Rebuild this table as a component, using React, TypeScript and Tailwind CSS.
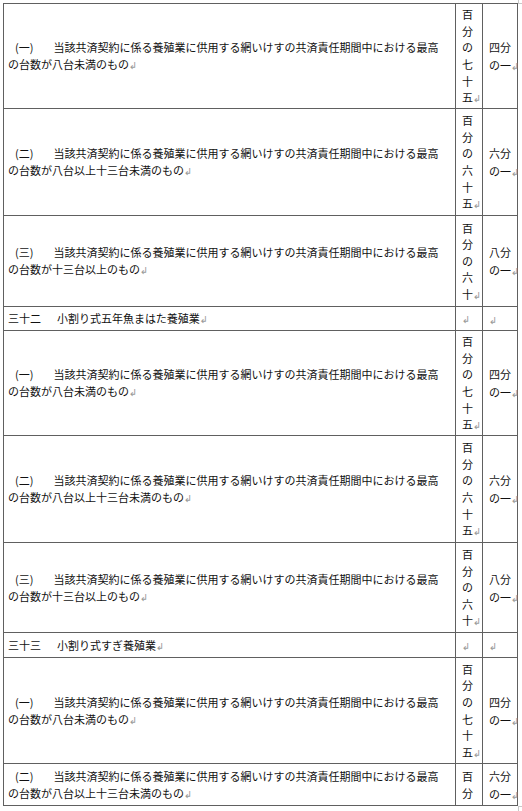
import React from "react";

const RM = () => (
  <span className="font-['DejaVu_Sans'] text-[10px] leading-none text-[#9a9a9a]">↲</span>
);

type RowProps = {
  h: string;
  c1: React.ReactNode;
  c2: React.ReactNode[];
  c3: React.ReactNode[];
};

function Row({ h, c1, c2, c3 }: RowProps) {
  return (
    <div className={`flex ${h}`}>
      <div className="w-[452px] shrink-0 border-r border-b border-[#606060] flex flex-col justify-center pl-[4px] leading-[17px] whitespace-nowrap">
        {c1}
      </div>
      <div className="w-[27px] shrink-0 border-r border-b border-[#606060] flex flex-col justify-center pl-[6px] leading-[16.6px] whitespace-nowrap">
        {c2.map((c, i) => (
          <div key={i}>{c}</div>
        ))}
      </div>
      <div className="w-[35px] shrink-0 border-r border-b border-[#606060] flex flex-col justify-center pl-[6px] leading-[18px] whitespace-nowrap">
        {c3.map((c, i) => (
          <div key={i}>{c}</div>
        ))}
      </div>
    </div>
  );
}

const LONG = "当該共済契約に係る養殖業に供用する網いけすの共済責任期間中における最高";

function Item({ num, tail }: { num: string; tail: string }) {
  return (
    <>
      <div>
        <span className="pl-[7px]">({num})</span>
        <span className="pl-[20px]">{LONG}</span>
      </div>
      <div>
        {tail}
        <RM />
      </div>
    </>
  );
}

function Heading({ num, text }: { num: string; text: string }) {
  return (
    <div>
      <span>{num}</span>
      <span className="pl-[16px]">
        {text}
        <RM />
      </span>
    </div>
  );
}

const p75 = ["百", "分", "の", "七", "十", <>五<RM /></>];
const p65 = ["百", "分", "の", "六", "十", <>五<RM /></>];
const p60 = ["百", "分", "の", "六", <>十<RM /></>];
const r4 = ["四分", <>の一<RM /></>];
const r6 = ["六分", <>の一<RM /></>];
const r8 = ["八分", <>の一<RM /></>];

export default function App() {
  return (
    <div className="relative w-[522px] h-[811px] overflow-hidden bg-white text-[#111] text-[11px] font-['Noto_Sans_CJK_JP','Liberation_Sans',sans-serif]">
      <div className="absolute left-[518px] top-0 h-[3px] w-px bg-[#c8c8c8]" />
      <div className="absolute left-[518px] top-[3px] h-px w-[4px] bg-[#c8c8c8]" />
      <div className="absolute left-[518px] top-[806px] h-[5px] w-px bg-[#c8c8c8]" />
      <div className="absolute left-[518px] top-[806px] h-px w-[4px] bg-[#c8c8c8]" />
      <div className="ml-[3px] mt-[3px] w-[515px] border-l border-t border-[#606060]">
        <Row h="h-[105px]" c1={<Item num="一" tail="の台数が八台未満のもの" />} c2={p75} c3={r4} />
        <Row h="h-[107px]" c1={<Item num="二" tail="の台数が八台以上十三台未満のもの" />} c2={p65} c3={r6} />
        <Row h="h-[91px]" c1={<Item num="三" tail="の台数が十三台以上のもの" />} c2={p60} c3={r8} />
        <Row h="h-[24px]" c1={<Heading num="三十二" text="小割り式五年魚まはた養殖業" />} c2={[<RM />]} c3={[<RM />]} />
        <Row h="h-[105px]" c1={<Item num="一" tail="の台数が八台未満のもの" />} c2={p75} c3={r4} />
        <Row h="h-[107px]" c1={<Item num="二" tail="の台数が八台以上十三台未満のもの" />} c2={p65} c3={r6} />
        <Row h="h-[90px]" c1={<Item num="三" tail="の台数が十三台以上のもの" />} c2={p60} c3={r8} />
        <Row h="h-[25px]" c1={<Heading num="三十三" text="小割り式すぎ養殖業" />} c2={[<RM />]} c3={[<RM />]} />
        <Row h="h-[106px]" c1={<Item num="一" tail="の台数が八台未満のもの" />} c2={p75} c3={r4} />
        <Row h="h-[42px]" c1={<Item num="二" tail="の台数が八台以上十三台未満のもの" />} c2={["百", "分"]} c3={r6} />
      </div>
    </div>
  );
}
